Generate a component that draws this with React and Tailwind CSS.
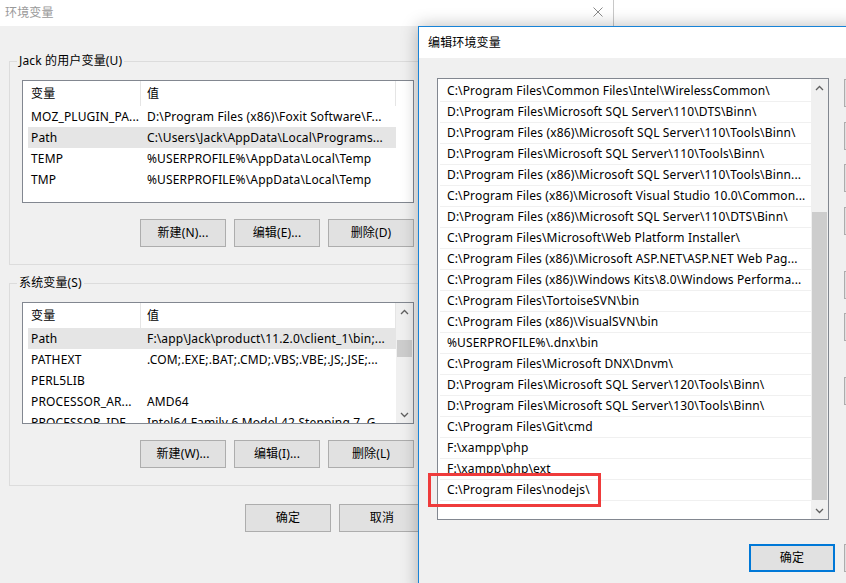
import clsx from 'clsx'

const userVars = [
  ['MOZ_PLUGIN_PA...', 'D:\\Program Files (x86)\\Foxit Software\\F...'],
  ['Path', 'C:\\Users\\Jack\\AppData\\Local\\Programs...', true],
  ['TEMP', '%USERPROFILE%\\AppData\\Local\\Temp'],
  ['TMP', '%USERPROFILE%\\AppData\\Local\\Temp'],
]

const sysVars = [
  ['Path', 'F:\\app\\Jack\\product\\11.2.0\\client_1\\bin;...', true],
  ['PATHEXT', '.COM;.EXE;.BAT;.CMD;.VBS;.VBE;.JS;.JSE;...'],
  ['PERL5LIB', ''],
  ['PROCESSOR_AR...', 'AMD64'],
  ['PROCESSOR_IDE...', 'Intel64 Family 6 Model 42 Stepping 7, G'],
]

const paths = [
  'C:\\Program Files\\Common Files\\Intel\\WirelessCommon\\',
  'D:\\Program Files\\Microsoft SQL Server\\110\\DTS\\Binn\\',
  'D:\\Program Files (x86)\\Microsoft SQL Server\\110\\Tools\\Binn\\',
  'D:\\Program Files\\Microsoft SQL Server\\110\\Tools\\Binn\\',
  'D:\\Program Files (x86)\\Microsoft SQL Server\\110\\Tools\\Binn...',
  'C:\\Program Files (x86)\\Microsoft Visual Studio 10.0\\Common...',
  'D:\\Program Files (x86)\\Microsoft SQL Server\\110\\DTS\\Binn\\',
  'C:\\Program Files\\Microsoft\\Web Platform Installer\\',
  'C:\\Program Files (x86)\\Microsoft ASP.NET\\ASP.NET Web Pag...',
  'C:\\Program Files (x86)\\Windows Kits\\8.0\\Windows Performa...',
  'C:\\Program Files\\TortoiseSVN\\bin',
  'C:\\Program Files (x86)\\VisualSVN\\bin',
  '%USERPROFILE%\\.dnx\\bin',
  'C:\\Program Files\\Microsoft DNX\\Dnvm\\',
  'D:\\Program Files\\Microsoft SQL Server\\120\\Tools\\Binn\\',
  'D:\\Program Files\\Microsoft SQL Server\\130\\Tools\\Binn\\',
  'C:\\Program Files\\Git\\cmd',
  'F:\\xampp\\php',
  'F:\\xampp\\php\\ext',
  'C:\\Program Files\\nodejs\\',
  '',
]

function Button({ children, primary, className }) {
  return (
    <div className={clsx('flex h-[28px] w-[86px] shrink-0 items-center justify-center bg-[#e1e1e1] text-[12px] whitespace-nowrap', primary ? 'border-2 border-[#0078d7]' : 'border border-[#adadad]', className)}>
      {children}
    </div>
  )
}

function Chevron({ down }) {
  return (
    <svg width="9" height="6" viewBox="0 0 9 6">
      <polyline points={down ? '1,1 4.5,4.5 8,1' : '1,5 4.5,1.5 8,5'} fill="none" stroke="#606060" strokeWidth="1.3" />
    </svg>
  )
}

function Scrollbar({ thumbTop, thumbH }) {
  return (
    <div className="flex w-[17px] shrink-0 flex-col bg-[#f0f0f0]">
      <div className="flex h-[17px] items-center justify-center"><Chevron /></div>
      <div className="flex-1">
        <div className="mx-[1px] bg-[#cdcdcd]" style={{ marginTop: thumbTop, height: thumbH }} />
      </div>
      <div className="flex h-[17px] items-center justify-center"><Chevron down /></div>
    </div>
  )
}

function VarList({ rows, scroll, h }) {
  return (
    <div className={clsx('flex w-[392px] border border-[#828790] bg-white', h)}>
      <div className="flex-1 overflow-hidden pl-[5px]">
        <div className="flex h-[25px]">
          <div className="flex w-[113px] items-center border-r border-[#e5e5e5] pl-[3px]">变量</div>
          <div className="flex w-[255px] items-center border-r border-[#e5e5e5] pl-[6px]">值</div>
        </div>
        {rows.map(([name, value, sel]) => (
          <div key={name} className={clsx('flex h-[21px] w-[368px] items-center whitespace-nowrap', sel && 'bg-[#e5e5e5]')}>
            <div className="w-[113px] overflow-hidden pl-[3px]">{name}</div>
            <div className="w-[255px] overflow-hidden pl-[6px]">{value}</div>
          </div>
        ))}
      </div>
      {scroll && <Scrollbar thumbTop={20} thumbH={17} />}
    </div>
  )
}

function Group({ label, children, className }) {
  return (
    <fieldset className={clsx('w-[417px] border border-[#dcdcdc]', className)}>
      <legend className="ml-[7px] px-[2px] text-[12px] leading-[16px]">{label}</legend>
      <div className="px-[12px] pt-[11px] pb-[17px]">{children}</div>
    </fieldset>
  )
}

export default function App() {
  return (
    <div className="relative h-[583px] w-[846px] overflow-hidden bg-white font-['Noto_Sans','Noto_Sans_CJK_SC',sans-serif] text-[12px] tracking-[0.15px] text-black">
      {/* 环境变量 window */}
      <div className="absolute top-0 left-0 flex h-[583px] w-[614px] flex-col border-r border-[#c8c8c8]">
        <div className="relative flex h-[26px] shrink-0 items-center bg-white pl-[5px] text-[#999999]">
          环境变量
          <svg className="absolute top-[7px] left-[593px]" width="10" height="10" viewBox="0 0 10 10">
            <path d="M0.5 0.5L9.5 9.5M9.5 0.5L0.5 9.5" stroke="#8a8a8a" strokeWidth="1" />
          </svg>
        </div>
        <div className="flex flex-1 flex-col bg-[#f0f0f0] pl-[9px]">
          <Group label="Jack 的用户变量(U)" className="mt-[27px]">
            <VarList rows={userVars} h="h-[123px]" />
            <div className="mt-[16px] flex justify-end gap-[8px]">
              <Button>新建(N)...</Button>
              <Button>编辑(E)...</Button>
              <Button>删除(D)</Button>
            </div>
          </Group>
          <Group label="系统变量(S)" className="mt-[10px]">
            <VarList rows={sysVars} scroll h="h-[122px]" />
            <div className="mt-[16px] flex justify-end gap-[8px]">
              <Button>新建(W)...</Button>
              <Button>编辑(I)...</Button>
              <Button>删除(L)</Button>
            </div>
          </Group>
          <div className="mt-[18px] flex w-[416px] justify-end gap-[8px]">
            <Button>确定</Button>
            <Button>取消</Button>
          </div>
        </div>
      </div>

      {/* 编辑环境变量 dialog */}
      <div className="absolute top-[26px] left-[418px] flex h-[570px] w-[440px] flex-col border border-[#1883d7] bg-[#f0f0f0] shadow-[0_0_16px_rgba(0,0,0,0.28)]">
        <div className="flex h-[31px] shrink-0 items-center bg-white pl-[9px]">编辑环境变量</div>
        <div className="flex flex-col pt-[20px] pl-[18px]">
          <div className="flex">
            <div className="flex h-[442px] w-[392px] shrink-0 border border-[#828790] bg-white">
              <div className="flex-1 overflow-hidden pt-[2px] pl-[2px]">
                {paths.map((p, i) => (
                  <div key={i} className="flex h-[21px] items-center border-b border-[#f0f0f0] pl-[7px] whitespace-nowrap">{p}</div>
                ))}
              </div>
              <Scrollbar thumbTop={116} thumbH={288} />
            </div>
            <div className="ml-[15px] flex flex-col pt-[1px]">
              <Button>新建(N)</Button>
              <Button className="mt-[15px]">编辑(E)</Button>
              <Button className="mt-[14px]">浏览(B)...</Button>
              <Button className="mt-[15px]">删除(D)</Button>
              <Button className="mt-[36px]">上移(U)</Button>
              <Button className="mt-[14px]">下移(O)</Button>
              <Button className="mt-[36px]">编辑文本(T)...</Button>
            </div>
          </div>
          <div className="mt-[24px] ml-[312px] flex gap-[9px]">
            <Button primary>确定</Button>
            <Button>取消</Button>
          </div>
        </div>
      </div>

      <div className="absolute top-[473px] left-[428px] h-[34px] w-[173px] border-[3px] border-[#ef3b3b]" />
    </div>
  )
}
